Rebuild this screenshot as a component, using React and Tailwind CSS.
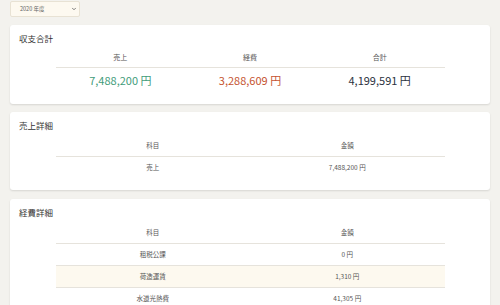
import { ChevronDown } from 'lucide-react';

const font = { fontFamily: '"Noto Sans CJK JP", "Noto Sans", sans-serif' };

const Card = ({ title, children, className = '' }) => (
  <div className={`bg-white rounded-[3px] shadow-[0_1px_2px_rgba(0,0,0,0.12)] pt-[7px] ${className}`}>
    <h2 className="pl-[9px] text-[8.5px] leading-[12px] text-[#333]">{title}</h2>
    <div className="w-[389px] mx-auto mt-[4px]">{children}</div>
  </div>
);

const expenses = [
  { name: '租税公課', amount: '0 円' },
  { name: '荷造運賃', amount: '1,310 円' },
  { name: '水道光熱費', amount: '41,305 円' },
];

export default function App() {
  return (
    <div className="min-h-screen bg-[#f3f2ee] px-[10px] pt-[1px] overflow-hidden" style={font}>
      {/* 年度セレクト */}
      <div className="w-[70px] h-[16px] mb-[8px] flex items-center justify-between pl-[9px] pr-[2px] bg-[#fdf9f0] border border-[#e8e2d4] rounded-[2px] text-[5.5px] text-[#666]">
        <span>2020 年度</span>
        <ChevronDown className="w-[6px] h-[6px] text-[#555]" strokeWidth={3} />
      </div>

      {/* 収支合計 */}
      <Card title="収支合計" className="pb-[12px] mb-[8px]">
        <div className="grid grid-cols-3 h-[20px] items-center text-center text-[7px] text-[#555] border-b border-[#e6e3dc]">
          <div>売上</div>
          <div>経費</div>
          <div>合計</div>
        </div>
        <div className="grid grid-cols-3 h-[24px] items-center text-center text-[11px] leading-none">
          <div className="text-[#3f9c7a]">7,488,200 円</div>
          <div className="text-[#c5532f]">3,288,609 円</div>
          <div className="text-[#2b3240]">4,199,591 円</div>
        </div>
      </Card>

      {/* 売上詳細 */}
      <Card title="売上詳細" className="pb-[11px] mb-[9px]">
        <div className="grid grid-cols-2 h-[22px] items-center text-center text-[6.5px] text-[#555] border-b border-[#e6e3dc]">
          <div>科目</div>
          <div>金額</div>
        </div>
        <div className="grid grid-cols-2 h-[22px] items-center text-center text-[6.5px] text-[#555]">
          <div>売上</div>
          <div>7,488,200 円</div>
        </div>
      </Card>

      {/* 経費詳細 */}
      <Card title="経費詳細" className="pb-[11px]">
        <div className="grid grid-cols-2 h-[22px] items-center text-center text-[6.5px] text-[#555] border-b border-[#e6e3dc]">
          <div>科目</div>
          <div>金額</div>
        </div>
        {expenses.map((e, i) => (
          <div
            key={e.name}
            className={`grid grid-cols-2 h-[22px] items-center text-center text-[6.5px] text-[#555] border-b border-[#e6e3dc] ${i % 2 === 1 ? 'bg-[#fdf9ef]' : ''}`}
          >
            <div>{e.name}</div>
            <div>{e.amount}</div>
          </div>
        ))}
      </Card>
    </div>
  );
}
